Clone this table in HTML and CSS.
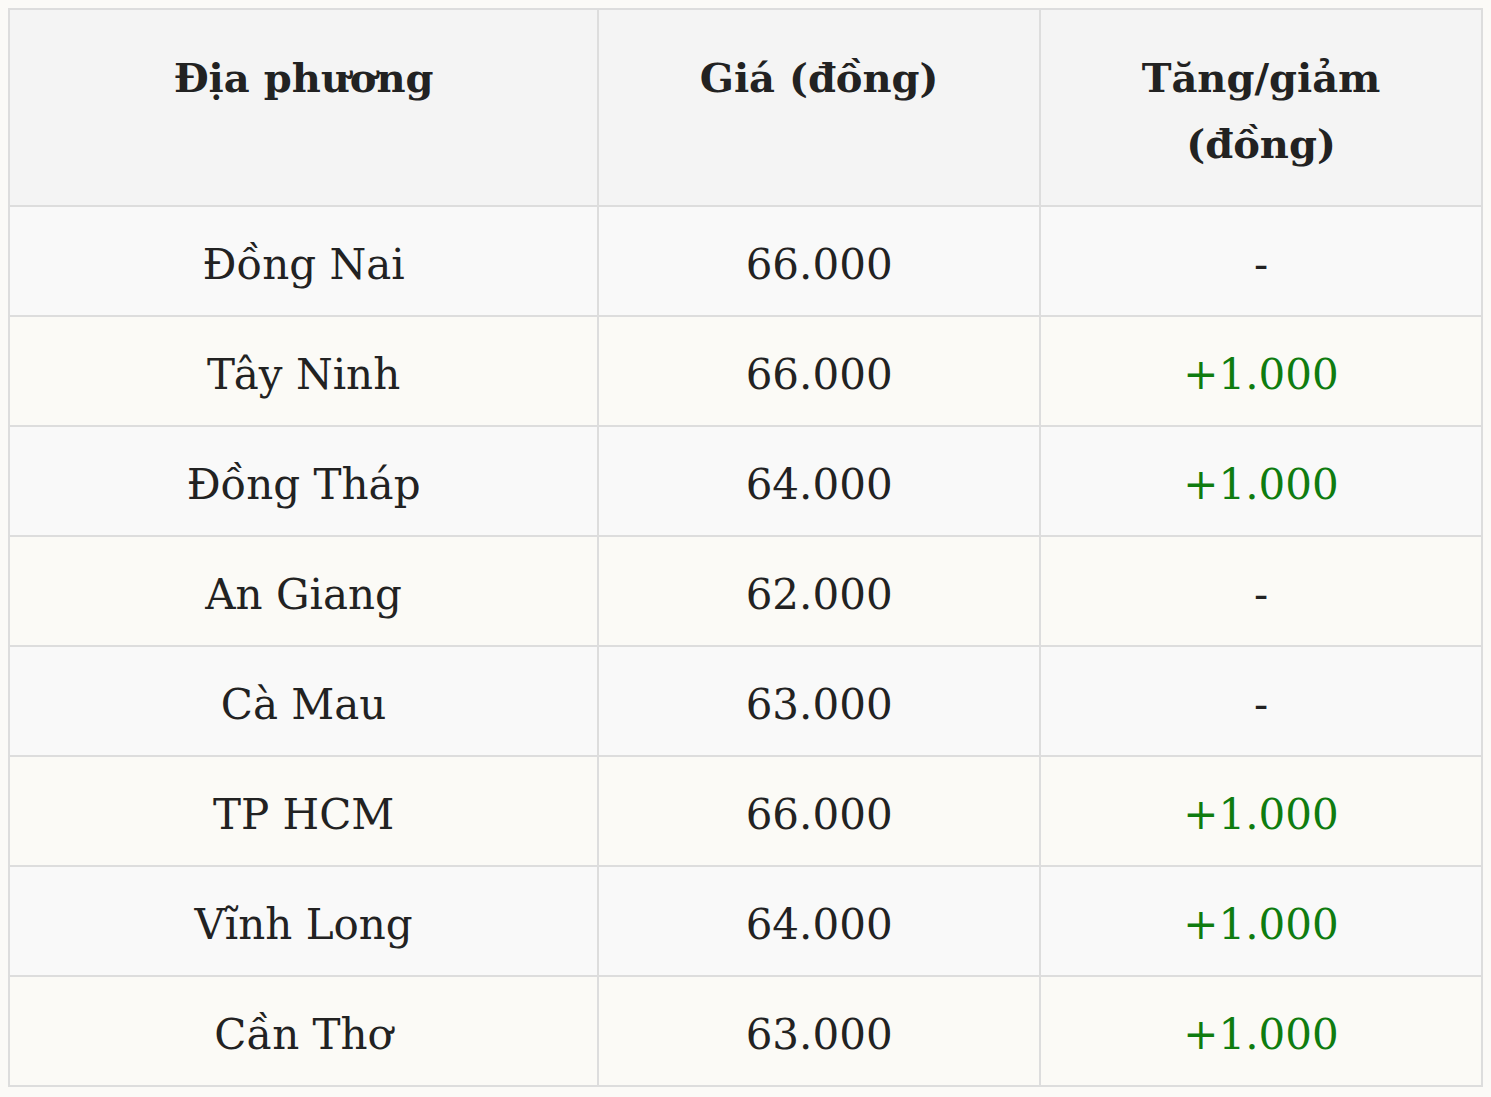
FILE: index.html
```html
<!DOCTYPE html>
<html lang="vi">
<head>
<meta charset="utf-8">
<title>Giá</title>
<link rel="stylesheet" href="styles.css">
</head>
<body>
<table class="price-table">
  <colgroup>
    <col class="c1"><col class="c2"><col class="c3">
  </colgroup>
  <thead>
    <tr><th>Địa phương</th><th>Giá (đồng)</th><th>Tăng/giảm (đồng)</th></tr>
  </thead>
  <tbody>
    <tr><td>Đồng Nai</td><td>66.000</td><td>-</td></tr>
    <tr><td>Tây Ninh</td><td>66.000</td><td class="up">+1.000</td></tr>
    <tr><td>Đồng Tháp</td><td>64.000</td><td class="up">+1.000</td></tr>
    <tr><td>An Giang</td><td>62.000</td><td>-</td></tr>
    <tr><td>Cà Mau</td><td>63.000</td><td>-</td></tr>
    <tr><td>TP HCM</td><td>66.000</td><td class="up">+1.000</td></tr>
    <tr><td>Vĩnh Long</td><td>64.000</td><td class="up">+1.000</td></tr>
    <tr><td>Cần Thơ</td><td>63.000</td><td class="up">+1.000</td></tr>
  </tbody>
</table>
</body>
</html>
```
FILE: styles.css
```css
html, body {
  background: #fbfaf7;
}
body {
  margin: 8px;
  font-family: "DejaVu Serif", "Liberation Serif", serif;
  color: #222;
}
.price-table {
  width: 100%;
  border-collapse: collapse;
  table-layout: fixed;
  font-size: 42px;
  line-height: 66px;
}
.c1 { width: 40%; }
.c2 { width: 30%; }
.c3 { width: 30%; }
.price-table th,
.price-table td {
  border: 2px solid #dddddd;
  text-align: center;
}
.price-table th {
  background: #f4f4f4;
  font-weight: bold;
  font-size: 40px;
  vertical-align: top;
  padding: 35px 20px 28px;
}
.price-table td {
  padding: 25px 20px 17px;
  vertical-align: middle;
}
.price-table tbody tr:nth-child(odd) td {
  background: #f9f9f9;
}
.price-table tbody tr:nth-child(even) td {
  background: #fbfaf6;
}
.price-table td.up {
  color: #0f7c10;
}
```
